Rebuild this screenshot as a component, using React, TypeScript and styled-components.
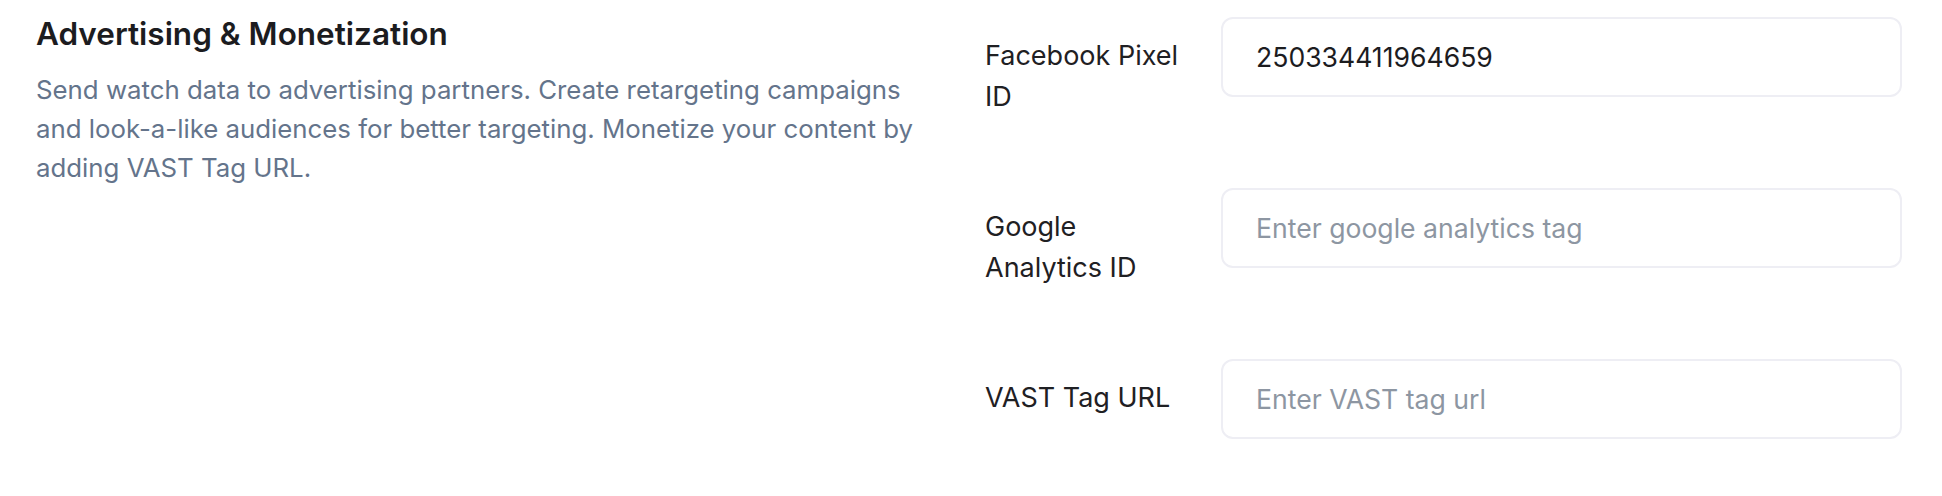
import { ReactElement } from 'react';
import styled, { createGlobalStyle } from 'styled-components';

const GlobalStyle = createGlobalStyle`
  body {
    margin: 0;
    background: #ffffff;
    font-family: Inter, 'Noto Sans', sans-serif;
  }
`;

type Field = {
  label: string;
  placeholder: string;
  value?: string;
};

const fields: Field[] = [
  {
    label: 'Facebook Pixel ID',
    placeholder: 'Enter facebook pixel id',
    value: '250334411964659',
  },
  { label: 'Google Analytics ID', placeholder: 'Enter google analytics tag' },
  { label: 'VAST Tag URL', placeholder: 'Enter VAST tag url' },
];

const AdvertisingSettings = (): ReactElement => (
  <Section>
    <Intro>
      <Title>Advertising &amp; Monetization</Title>
      <Description>
        Send watch data to advertising partners. Create retargeting campaigns
        and look-a-like audiences for better targeting. Monetize your content
        by adding VAST Tag URL.
      </Description>
    </Intro>
    <Form>
      {fields.map((field) => (
        <FieldRow key={field.label}>
          <FieldLabel>{field.label}</FieldLabel>
          <TextInput
            type="text"
            placeholder={field.placeholder}
            defaultValue={field.value}
          />
        </FieldRow>
      ))}
    </Form>
  </Section>
);

const Section = styled.section`
  display: grid;
  grid-template-columns: 1fr 1fr;
  column-gap: 32px;
  padding: 17px 40px 0 36px;
`;

const Intro = styled.div`
  display: flex;
  flex-direction: column;
  gap: 19px;
`;

const Title = styled.h2`
  margin: 0;
  font-size: 31.5px;
  line-height: 34px;
  font-weight: 600;
  color: #1c1c1f;
`;

const Description = styled.p`
  margin: 0;
  font-size: 25.8px;
  line-height: 39px;
  color: #64748b;
`;

const Form = styled.div`
  display: flex;
  flex-direction: column;
  gap: 71px;
`;

const FieldRow = styled.label`
  display: flex;
  align-items: flex-start;
  gap: 24px;
`;

const FieldLabel = styled.span`
  flex: 0 0 212px;
  padding-top: 18px;
  font-size: 27px;
  line-height: 41px;
  color: #1f2023;
`;

const TextInput = styled.input`
  flex: 1;
  min-width: 0;
  box-sizing: border-box;
  height: 80px;
  padding: 0 33px;
  border: 2px solid #eeeef4;
  border-radius: 12px;
  background: #ffffff;
  font-family: Inter, 'Noto Sans', sans-serif;
  font-size: 26.6px;
  color: #1c1c1f;
  outline: none;

  &::placeholder {
    color: #8d96a2;
  }
`;

const App = (): ReactElement => (
  <>
    <GlobalStyle />
    <AdvertisingSettings />
  </>
);

export default App;
